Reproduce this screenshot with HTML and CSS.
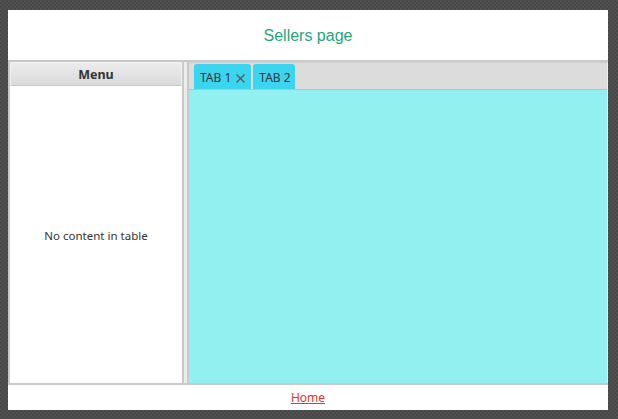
FILE: index.html
```html
<!DOCTYPE html>
<html>
<head>
<meta charset="utf-8">
<link rel="stylesheet" href="styles.css">
</head>
<body>
<div class="window">
  <header class="top">Sellers page</header>
  <main class="split">
    <section class="left">
      <div class="menu-head">Menu</div>
      <div class="menu-body">No content in table</div>
    </section>
    <div class="divider"></div>
    <section class="right">
      <div class="tabbar">
        <div class="tab">TAB 1
          <svg class="close" width="9" height="9" viewBox="0 0 9 9"><path d="M0.5 0.5L8.5 8.5M8.5 0.5L0.5 8.5" stroke="#555" stroke-width="1.2" fill="none"/></svg>
        </div>
        <div class="tab tab-plain">TAB 2</div>
      </div>
      <div class="tab-content"></div>
    </section>
  </main>
  <footer class="bottom"><a class="home" href="#">Home</a></footer>
</div>
</body>
</html>
```
FILE: styles.css
```css
html, body {
  margin: 0;
  padding: 0;
  height: 100%;
}
body {
  background: repeating-conic-gradient(#474747 0 25%, #525252 0 50%) 0 0 / 4px 4px;
  font-family: "Noto Sans", "Open Sans", sans-serif;
}
.window {
  margin: 10px 0 0 8px;
  width: 600px;
  height: 400px;
  background: #fff;
  display: flex;
  flex-direction: column;
}
.top {
  height: 50px;
  display: flex;
  align-items: center;
  justify-content: center;
  font-family: "Liberation Sans", Arial, sans-serif;
  font-size: 16px;
  color: #1fa67d;
  padding-top: 1px;
  box-sizing: border-box;
}
.split {
  flex: 1;
  display: flex;
  border-top: 2px solid #c9c9c9;
  border-bottom: 2px solid #c9c9c9;
  min-height: 0;
}
.left {
  width: 172px;
  border-left: 2px solid #c9c9c9;
  border-right: 2px solid #c9c9c9;
  display: flex;
  flex-direction: column;
}
.menu-head {
  height: 22px;
  border: 1px solid #f2f2f2;
  border-bottom: 1px solid #c9c9c9;
  background: linear-gradient(#ececec, #dadada);
  font-weight: bold;
  font-size: 12.5px;
  color: #333;
  display: flex;
  align-items: center;
  justify-content: center;
}
.menu-body {
  flex: 1;
  display: flex;
  align-items: center;
  justify-content: center;
  font-size: 11.5px;
  color: #333;
  padding-top: 1px;
}
.divider {
  width: 3px;
  background: #ececec;
  border-right: 2px solid #c9c9c9;
}
.right {
  flex: 1;
  display: flex;
  flex-direction: column;
  border-right: 1px solid #eeeeee;
}
.tabbar {
  height: 27px;
  background: linear-gradient(#cfcfcf 0, #dcdcdc 2px, #dcdcdc);
  display: flex;
  align-items: flex-end;
  gap: 2px;
  padding-left: 5px;
  border-bottom: 1px solid #c6bcbc;
}
.tab {
  height: 25px;
  box-sizing: border-box;
  background: #3cd5ef;
  border-radius: 3px 3px 0 0;
  padding: 2px 6px 0 6px;
  display: flex;
  align-items: center;
  gap: 5px;
  font-size: 12px;
  color: #333;
}
.tab-plain {
  padding-right: 4px;
}
.close {
  display: block;
  margin-top: 1px;
}
.tab-content {
  flex: 1;
  background: #93f0f0;
}
.bottom {
  height: 25px;
  display: flex;
  align-items: center;
  justify-content: center;
}
.home {
  color: #e8332a;
  font-size: 12px;
  text-decoration: underline;
}
```
